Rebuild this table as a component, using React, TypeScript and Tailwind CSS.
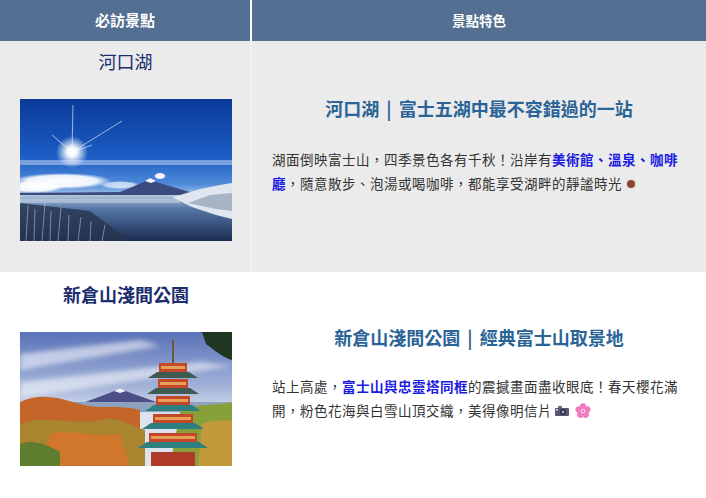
// Fuji spots table: two rows, photo on the left, write-up on the right.

const FONT = { fontFamily: '"Noto Sans CJK TC", "Noto Sans", sans-serif' };

function LakePhoto() {
  return (
    <svg width="212" height="142" viewBox="0 0 212 142" className="block">
      <defs>
        <linearGradient id="sky1" x1="0" y1="0" x2="0" y2="1">
          <stop offset="0" stopColor="#0a3a98" />
          <stop offset="0.4" stopColor="#1c5cc4" />
          <stop offset="0.6" stopColor="#4f8ad8" />
          <stop offset="0.68" stopColor="#a9c6ec" />
        </linearGradient>
        <linearGradient id="lake1" x1="0" y1="0" x2="0" y2="1">
          <stop offset="0" stopColor="#b3c7de" />
          <stop offset="0.3" stopColor="#5576a6" />
          <stop offset="1" stopColor="#1a2c50" />
        </linearGradient>
        <radialGradient id="sun1">
          <stop offset="0" stopColor="#ffffff" />
          <stop offset="0.3" stopColor="#ffffff" stopOpacity="0.95" />
          <stop offset="1" stopColor="#ffffff" stopOpacity="0" />
        </radialGradient>
        <radialGradient id="cloud1">
          <stop offset="0" stopColor="#ffffff" />
          <stop offset="0.7" stopColor="#ffffff" stopOpacity="0.9" />
          <stop offset="1" stopColor="#ffffff" stopOpacity="0" />
        </radialGradient>
      </defs>
      <rect width="212" height="142" fill="url(#sky1)" />
      <rect x="0" y="61" width="212" height="5" fill="#dfe9f8" opacity="0.45" />
      <ellipse cx="42" cy="82" rx="50" ry="8" fill="url(#cloud1)" />
      <ellipse cx="14" cy="88" rx="30" ry="6" fill="url(#cloud1)" />
      <ellipse cx="100" cy="86" rx="20" ry="4" fill="url(#cloud1)" opacity="0.7" />
      <ellipse cx="140" cy="77" rx="6" ry="3.5" fill="url(#cloud1)" />
      <circle cx="52" cy="53" r="16" fill="url(#sun1)" />
      <g stroke="#ffffff" strokeWidth="0.7" opacity="0.85">
        <line x1="52" y1="53" x2="53" y2="6" />
        <line x1="52" y1="53" x2="102" y2="22" />
        <line x1="52" y1="53" x2="32" y2="36" />
        <line x1="52" y1="53" x2="72" y2="46" />
      </g>
      <path d="M0 94 L100 93 L124 83 L130 79 L136 83 L170 93 L212 94 L212 98 L0 98 Z" fill="#3a4c7e" />
      <path d="M125 82 L130 79 L136 82 L131 84 Z" fill="#f3f5fb" />
      <rect x="0" y="96" width="212" height="46" fill="url(#lake1)" />
      <rect x="0" y="100" width="160" height="4" fill="#d2deec" opacity="0.45" />
      <path d="M152 98 L160 96 L180 90 L200 86 L212 84 L212 120 L196 116 L172 108 Z" fill="#dfe6ef" />
      <path d="M168 104 L190 96 L212 94 L212 112 L196 110 Z" fill="#6f829d" opacity="0.5" />
      <path d="M0 104 L70 112 L110 142 L0 142 Z" fill="#27344f" opacity="0.8" />
      <g stroke="#c7d1df" strokeWidth="0.7" opacity="0.75">
        <line x1="6" y1="142" x2="8" y2="106" />
        <line x1="14" y1="142" x2="15" y2="110" />
        <line x1="22" y1="142" x2="25" y2="104" />
        <line x1="30" y1="142" x2="31" y2="112" />
        <line x1="38" y1="142" x2="41" y2="108" />
        <line x1="48" y1="142" x2="49" y2="116" />
        <line x1="58" y1="142" x2="61" y2="118" />
        <line x1="70" y1="142" x2="71" y2="122" />
        <line x1="82" y1="142" x2="85" y2="126" />
      </g>
    </svg>
  );
}

function PagodaPhoto() {
  const tiers = [
    { y: 42, w: 50 },
    { y: 58, w: 52 },
    { y: 75, w: 56 },
    { y: 93, w: 62 },
    { y: 112, w: 70 },
  ];
  const cx = 153;
  return (
    <svg width="212" height="134" viewBox="0 0 212 134" className="block">
      <defs>
        <linearGradient id="sky2" x1="0" y1="0" x2="0" y2="1">
          <stop offset="0" stopColor="#5a72b8" />
          <stop offset="0.4" stopColor="#a0b1d8" />
          <stop offset="0.62" stopColor="#dde3ef" />
        </linearGradient>
        <filter id="soft2" x="-20%" y="-50%" width="140%" height="200%">
          <feGaussianBlur stdDeviation="2.5" />
        </filter>
      </defs>
      <rect width="212" height="134" fill="url(#sky2)" />
      <g fill="#ffffff" opacity="0.55" filter="url(#soft2)">
        <path d="M0 22 L120 8 L140 14 L0 38 Z" />
        <path d="M0 50 L180 30 L212 34 L0 66 Z" />
      </g>
      <path d="M60 72 L92 60 L100 56 L108 60 L142 72 Z" fill="#4b4f85" />
      <path d="M94 59 L100 56 L106 59 L100 61 Z" fill="#eef0f8" />
      <rect x="0" y="70" width="212" height="10" fill="#8ea2bd" />
      <g>
        <path d="M0 70 C20 60 40 66 60 72 C80 78 100 72 120 78 L120 134 L0 134 Z" fill="#c4652a" />
        <path d="M0 92 C25 82 50 94 80 88 C100 84 110 94 125 98 L125 134 L0 134 Z" fill="#a8852e" />
        <path d="M30 102 C50 96 70 106 100 102 L110 134 L20 134 Z" fill="#d0772c" />
        <path d="M0 112 C15 106 30 114 40 120 L40 134 L0 134 Z" fill="#5f7d2e" />
        <path d="M160 80 C180 70 200 74 212 70 L212 134 L150 134 Z" fill="#87a03a" />
        <path d="M182 92 C195 86 205 90 212 88 L212 134 L178 134 Z" fill="#c29a3c" />
      </g>
      <path d="M182 0 L212 0 L212 28 C204 26 194 18 186 12 Z" fill="#213622" />
      <line x1={cx} y1="8" x2={cx} y2="42" stroke="#6b5a3a" strokeWidth="2" />
      {tiers.map((t, i) => (
        <g key={i}>
          <rect x={cx - t.w / 2 + 11} y={t.y - 11} width={t.w - 22} height="13" fill="#c5472a" />
          <rect x={cx - t.w / 2 + 13} y={t.y - 8} width={t.w - 26} height="3" fill="#f2c46a" opacity="0.7" />
          <path
            d={`M${cx - t.w / 2} ${t.y + 4} L${cx - t.w / 2 + 9} ${t.y - 2} L${cx + t.w / 2 - 9} ${t.y - 2} L${cx + t.w / 2} ${t.y + 4} Z`}
            fill={i < 2 ? "#3e5a52" : "#2f7f80"}
          />
        </g>
      ))}
      <rect x={cx - 22} y="120" width="44" height="14" fill="#b23a28" />
    </svg>
  );
}

function BrownDot() {
  return (
    <span className="inline-block align-[-1px] w-[12px] h-[12px] rounded-full bg-[#e2e2e2] ml-[3px]">
      <span className="block w-[8px] h-[8px] m-[2px] rounded-full bg-[#8a4433]" />
    </span>
  );
}

function Camera() {
  return (
    <svg width="16" height="12" viewBox="0 0 16 12" className="inline-block align-[-1px] ml-[2px]">
      <rect x="4" y="1" width="4" height="2" fill="#6b6a8a" />
      <rect x="1" y="3" width="14" height="8" rx="1" fill="#585876" />
      <circle cx="9" cy="7" r="3" fill="#2d2d44" />
      <circle cx="9" cy="7" r="1.5" fill="#9a9ac0" />
      <rect x="2" y="4" width="2" height="1.5" fill="#d8d8e8" />
    </svg>
  );
}

function Blossom() {
  return (
    <svg width="16" height="16" viewBox="0 0 16 16" className="inline-block align-[-3px] ml-[5px]">
      {[0, 72, 144, 216, 288].map((a) => (
        <ellipse key={a} cx="8" cy="4" rx="3.3" ry="3.8" fill="#f07cc0" transform={`rotate(${a} 8 8)`} />
      ))}
      <circle cx="8" cy="8" r="2.2" fill="#fbd0ea" />
      <circle cx="8" cy="8" r="1" fill="#e35aa6" />
    </svg>
  );
}

function Link({ children }: { children: React.ReactNode }) {
  return <span className="text-[#1a1ae0] font-bold">{children}</span>;
}

function Bar() {
  return <span className="mx-[7px]">|</span>;
}

export default function App() {
  return (
    <div className="w-[706px] h-[498px] overflow-hidden bg-white" style={FONT}>
      <div className="grid grid-cols-[252px_454px]">
        <div className="h-[41px] bg-[#536f91] border-r-2 border-white flex items-center justify-center text-white font-bold text-[15px]">
          必訪景點
        </div>
        <div className="h-[41px] bg-[#536f91] flex items-center justify-center text-white font-bold text-[13.5px]">
          景點特色
        </div>

        <div className="h-[231px] bg-[#ebebeb] border-r border-[#f7f7f7] pt-[7px]">
          <div className="text-center text-[18px] leading-[26px] text-[#1c2d6e]">河口湖</div>
          <div className="mt-[25px] mx-auto w-[212px]">
            <LakePhoto />
          </div>
        </div>
        <div className="h-[231px] bg-[#ebebeb] pt-[54px] pl-5 pr-3">
          <div className="text-center text-[18px] leading-[26px] font-bold text-[#2a6496] pr-2">
            河口湖<Bar />富士五湖中最不容錯過的一站
          </div>
          <p className="mt-[26px] text-[13.5px] leading-[24px] tracking-[0.5px] text-[#333333]">
            湖面倒映富士山，四季景色各有千秋！沿岸有<Link>美術館、溫泉、咖啡廳</Link>，隨意散步、泡湯或喝咖啡，都能享受湖畔的靜謐時光
            <BrownDot />
          </p>
        </div>

        <div className="h-[226px] bg-white pt-[9px]">
          <div className="text-center text-[18px] leading-[26px] font-bold text-[#1c2d6e]">新倉山淺間公園</div>
          <div className="mt-[25px] mx-auto w-[212px]">
            <PagodaPhoto />
          </div>
        </div>
        <div className="h-[226px] bg-white pt-[52px] pl-5 pr-3">
          <div className="text-center text-[18px] leading-[26px] font-bold text-[#2a6496] pr-2">
            新倉山淺間公園<Bar />經典富士山取景地
          </div>
          <p className="mt-[24px] text-[13.5px] leading-[24px] tracking-[0.5px] text-[#333333]">
            站上高處，<Link>富士山與忠靈塔同框</Link>的震撼畫面盡收眼底！春天櫻花滿開，粉色花海與白雪山頂交織，美得像明信片
            <Camera />
            <Blossom />
          </p>
        </div>
      </div>
    </div>
  );
}
